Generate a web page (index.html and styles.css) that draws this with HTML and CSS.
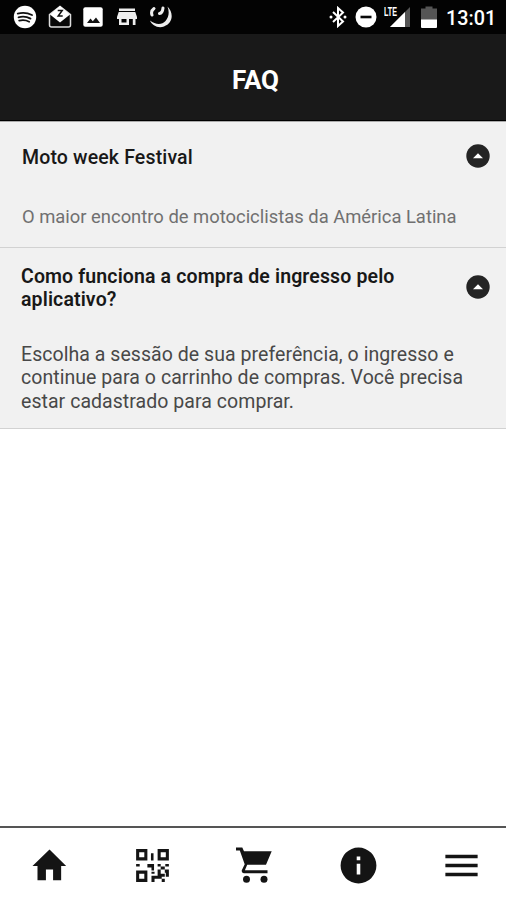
FILE: index.html
```html
<!DOCTYPE html>
<html lang="pt-BR">
<head>
<meta charset="utf-8">
<title>FAQ</title>
<link rel="stylesheet" href="styles.css">
</head>
<body>
<div class="status">
  <div class="notifications">
    <svg width="24" height="24" viewBox="0 0 24 24"><circle cx="12" cy="12" r="11.2" fill="#fff"/><path d="M4.700 8.600q7.500-2 14.300 1.400M5.500 12.300q6.500-1.700 12 1.300M6.200 15.600q5.500-1.300 10 1.100" fill="none" stroke="#111" stroke-width="1.800" stroke-linecap="round"/></svg>
    <svg width="24" height="24" viewBox="0 0 24 24"><path d="M1.500 9.500 12 1.500l10.500 8V20q0 2-2 2h-17q-2 0-2-2z" fill="#080808" stroke="#ddd" stroke-width="1.500"/><path d="M2 9.500 12 1l10 8.500-10 8z" fill="#fff"/><path d="M9.700 5.500h4.500l-4 5.500h4.500" fill="none" stroke="#111" stroke-width="1.500"/></svg>
    <svg width="20" height="20" viewBox="0 0 20 20"><rect x=".3" y=".3" width="19.400" height="19.400" rx="2" fill="#fff"/><path d="m4 16 3.500-4.500 2.300 2.800L13 10.500l4 5.500z" fill="#111"/></svg>
    <svg width="20" height="18" viewBox="0 0 20 18"><path d="M2 .5h16V3H2zM1.700 4h16.600L20 9v2h-1.500v6h-2.700v-6H12v6H2v-6H0V9zM4.500 11v3.500h5V11z" fill="#eee" fill-rule="evenodd"/></svg>
    <svg width="24" height="24" viewBox="0 0 24 24"><path d="M18.500 1.500C25 8 24 18.500 15 21.500 9 23.500 3 20.500 1 15.500c5.500 4.500 12 4.500 15.500.5 3.500-4 4-9 2-14.500z" fill="#eee"/><path d="M3 10Q1.500 6 5 3.500M10.500 8.500q3-.5 3.500-5.500" fill="none" stroke="#eee" stroke-width="3" stroke-linecap="round"/></svg>
  </div>
  <div class="system">
    <svg class="bluetooth" width="18" height="22" viewBox="0 0 18 22"><path d="m4 6 10 9.500L9 20V2l5 4.500L4 16" fill="none" stroke="#fff" stroke-width="2"/><circle cx="2" cy="11" r="1.500" fill="#fff"/><circle cx="16" cy="11" r="1.500" fill="#fff"/></svg>
    <svg class="dnd" width="22" height="22" viewBox="0 0 22 22"><circle cx="11" cy="11" r="10.500" fill="#fff"/><path d="M5.500 11h11" stroke="#080808" stroke-width="2.600"/></svg>
    <div class="signal"><svg width="21" height="21" viewBox="0 0 21 21"><path d="M21 0v20H1z" fill="#555"/><path d="M16 5v15H1z" fill="#fff"/></svg><span class="lte">LTE</span></div>
    <svg class="battery" width="16" height="22" viewBox="0 0 16 22"><path d="M4.500.5h7v2H16V14H0V2.500h4.500z" fill="#555"/><path d="M0 13.500h16V21q0 1-1 1H1q-1 0-1-1z" fill="#fff"/></svg>
    <span class="time">13:01</span>
  </div>
</div>
<header class="header"><h1>FAQ</h1></header>
<main class="content">
  <section class="item first">
    <div class="question"><h2>Moto week Festival</h2><svg class="toggle" viewBox="0 0 24 24"><circle cx="12" cy="12" r="11.700" fill="#242424"/><path d="m7 14.300 5-5.100 5 5.100z" fill="#fff"/></svg></div>
    <p>O maior encontro de motociclistas da América Latina</p>
  </section>
  <section class="item second">
    <div class="question"><h2>Como funciona a compra de ingresso pelo<br>aplicativo?</h2><svg class="toggle" viewBox="0 0 24 24"><circle cx="12" cy="12" r="11.700" fill="#242424"/><path d="m7 14.300 5-5.100 5 5.100z" fill="#fff"/></svg></div>
    <p>Escolha a sessão de sua preferência, o ingresso e<br>continue para o carrinho de compras. Você precisa<br>estar cadastrado para comprar.</p>
  </section>
</main>
<nav class="tabs">
  <svg viewBox="0 0 24 24"><path d="M10 20.300v-6h4v6h4.500v-8h2.800L12 3l-9.500 9.300h2.800v8z"/></svg>
  <svg viewBox="0 0 42 42"><path fill-rule="evenodd" d="M5 5h11v11H5zm3 3v5h5V8zM26 5h11v11H26zm3 3v5h5V8zM5 26h11v11H5zm3 3v5h5v-5zM19.500 9H22v7h-2.500zM5 19.500h3.500V22H5zM16 19.500h6.500V26H20v-3h-4zM26 19.500h3V22h-3zM33.500 19.500H37V22h-3.500zM29 22h4v3h-4zM26 25h3v4h4v3h-3v2h-7v3h-3v-6h6zM33 25h4v7h-3v-4h-1zM20 27h3v2h-3zM30 34h3v3h-3z"/></svg>
  <svg viewBox="0 0 43 43"><path d="M2 3.500h6.300L10 7.200h27.700L32 20.800H13.200l-2.300 5.400h22.600v3H9.800q-2.600-.4-2-3l2.900-6L5.800 6.500H2z"/><circle cx="12.500" cy="35.200" r="3.500"/><circle cx="30" cy="35.200" r="3.500"/></svg>
  <svg viewBox="0 0 24 24"><path d="M12 2a10 10 0 1 0 0 20 10 10 0 0 0 0-20zm1 15h-2v-6h2v6zm0-8h-2V7h2v2z"/></svg>
  <svg viewBox="0 0 24 24"><path d="M3 18h18v-2H3v2zm0-5h18v-2H3v2zm0-7v2h18V6H3z"/></svg>
</nav>
</body>
</html>
```
FILE: styles.css
```css
* { box-sizing: border-box; }
body {
  margin: 0;
  height: 900px;
  display: flex;
  flex-direction: column;
  overflow: hidden;
  background: #fff;
  color: #181818;
  font-family: Roboto, "Liberation Sans", sans-serif;
}
svg { display: block; flex: none; }
h1, h2, p { margin: 0; }
.status {
  height: 34px;
  flex: none;
  display: flex;
  justify-content: space-between;
  background: #030303;
  padding: 0 11px 0 13px;
}
.notifications, .system { display: flex; align-items: center; }
.notifications { gap: 12px; }
.notifications svg:nth-child(2) { margin: 0 -1px; }
.notifications svg:nth-child(4) { margin-left: 2px; }
.dnd { margin-left: 8px; }
.signal { margin-left: 12px; position: relative; }
.lte {
  position: absolute;
  left: -5px;
  top: -1px;
  font-family: "Liberation Sans", sans-serif;
  font-size: 12px;
  line-height: 12px;
  font-weight: 700;
  color: #fff;
  transform: scaleX(.6);
  transform-origin: left top;
}
.battery { margin-left: 11px; }
.time {
  width: 49px;
  margin-left: 9px;
  padding-top: 2px;
  font-size: 19.800px;
  font-weight: 500;
  color: #fff;
  white-space: nowrap;
}
.header {
  height: 87px;
  flex: none;
  display: flex;
  align-items: center;
  justify-content: center;
  background: #191919;
  border-bottom: 1px solid #000;
  padding: 6px 0 0 5px;
}
h1 { color: #fff; font-size: 26px; font-weight: 700; line-height: 30px; letter-spacing: -.100px; }
.content { flex: 1; border-top: 1px solid #aaa; }
.item { background: #f1f1f1; border-bottom: 1px solid #d2d2d2; padding: 0 16px 0 22px; }
.first { height: 126px; padding-top: 23px; }
.second { height: 181px; padding: 17px 16px 0 21px; }
.question { display: flex; justify-content: space-between; align-items: center; }
h2 { font-size: 19.500px; font-weight: 500; line-height: 23.400px; white-space: nowrap; letter-spacing: .150px; }
.first h2 { padding-top: 1px; }
.second h2 { font-weight: 600; letter-spacing: .130px; }
.toggle { width: 24px; height: 24px; margin-top: -2px; }
p { font-size: 19.500px; line-height: 23.400px; color: #484848; white-space: nowrap; }
.first p { margin-top: 36px; color: #707070; font-size: 18.400px; }
.second p { margin-top: 31px; letter-spacing: .050px; }
.tabs {
  height: 74px;
  flex: none;
  border-top: 2px solid #555;
  display: flex;
  justify-content: space-between;
  padding: 16px 23px 0 28px;
}
.tabs svg { width: 43px; height: 43px; fill: #141414; }
```
